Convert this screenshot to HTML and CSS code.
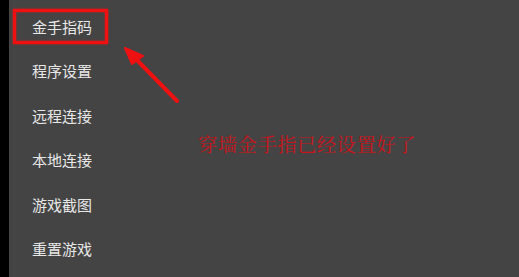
FILE: index.html
```html
<html lang="en">
<head>
    <meta charset="UTF-8">
    <meta name="viewport" content="width=device-width, initial-scale=1.0">
    <link rel="stylesheet" href="styles.css">
    <title>Menu</title>
</head>
<body>
  <div class="screen">
    <div class="edge"></div>
    <div class="menu">
      <div class="item mark">金手指码</div>
      <div class="item">程序设置</div>
      <div class="item">远程连接</div>
      <div class="item">本地连接</div>
      <div class="item">游戏截图</div>
      <div class="item">重置游戏</div>
    </div>
    <svg class="arrow" width="519" height="277" viewBox="0 0 519 277">
      <line x1="177" y1="101" x2="134" y2="57" stroke="#ee1111" stroke-width="4" stroke-linecap="round"/>
      <polygon points="125,48 143,56 132,64" fill="#ee1111" stroke="#ee1111" stroke-width="2" stroke-linejoin="round"/>
    </svg>
    <div class="note">穿墙金手指已经设置好了</div>
  </div>
</body>
</html>
```

FILE: styles.css
```css
html, body {
  margin: 0;
  padding: 0;
  background: #444444;
}
.screen {
  position: relative;
  display: flex;
  width: 519px;
  height: 277px;
  overflow: hidden;
  font-family: "Noto Sans CJK SC", "Noto Sans", sans-serif;
}
.edge {
  width: 9px;
  background: #000;
}
.menu {
  display: flex;
  flex-direction: column;
  padding-top: 5px;
}
.item {
  height: 44.4px;
  line-height: 44.4px;
  padding-left: 23px;
  font-size: 15px;
  color: #e8e8e8;
}
.mark {
  position: relative;
}
.mark::after {
  content: "";
  position: absolute;
  left: 4px;
  top: 4px;
  width: 89px;
  height: 29px;
  border: 3px solid #ee1111;
  box-shadow: 0 0 2px #ee1111, inset 0 0 2px #ee1111;
}
.arrow {
  position: absolute;
  left: 0;
  top: 0;
}
.note {
  position: absolute;
  left: 198px;
  top: 131px;
  font-family: "Noto Serif CJK SC", "AR PL UMing CN", serif;
  font-size: 19.5px;
  line-height: 26px;
  color: #c8141c;
  letter-spacing: 0.3px;
}
```
